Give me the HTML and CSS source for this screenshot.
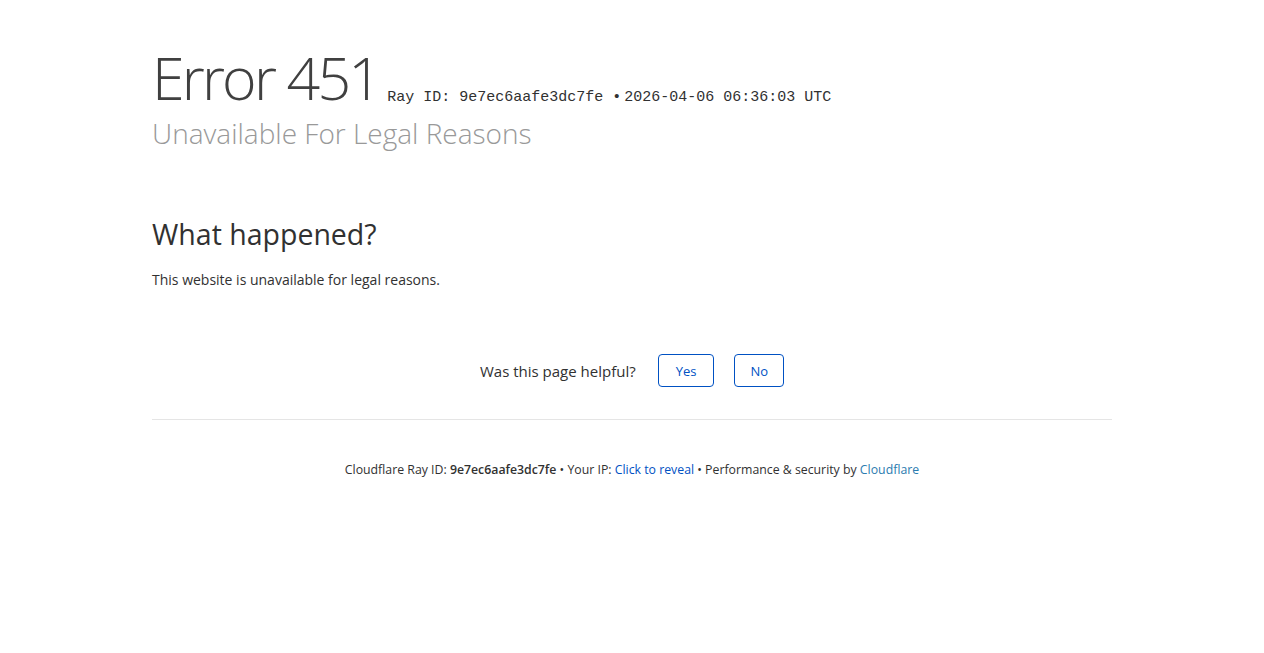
FILE: index.html
```html
<!DOCTYPE html>
<html lang="en">
<head>
<meta charset="utf-8">
<title>Error 451</title>
<link rel="stylesheet" href="styles.css">
</head>
<body>
<div class="page">
  <header class="hero">
    <h1 class="title"><span class="code">Error 451</span><span class="ray">Ray ID: 9e7ec6aafe3dc7fe &bull;</span><span class="ray">2026-04-06 06:36:03 UTC</span></h1>
    <h2 class="subtitle">Unavailable For Legal Reasons</h2>
  </header>
  <section class="what">
    <h2 class="what-title">What happened?</h2>
    <p class="what-text">This website is unavailable for legal reasons.</p>
  </section>
  <div class="feedback">
    <span class="feedback-q">Was this page helpful?</span>
    <button class="btn">Yes</button>
    <button class="btn btn-no">No</button>
  </div>
  <footer class="footer">
    Cloudflare Ray ID: <strong>9e7ec6aafe3dc7fe</strong> &bull; Your IP: <a class="link" href="#">Click to reveal</a> &bull; Performance &amp; security by <a class="link cf" href="#">Cloudflare</a>
  </footer>
</div>
</body>
</html>
```
FILE: styles.css
```css
* { box-sizing: border-box; }
html, body { margin: 0; padding: 0; background: #fff; }
body {
  font-family: "Open Sans", "Noto Sans", sans-serif;
  color: #313131;
}
.page {
  width: 960px;
  margin: 0 auto;
  padding-top: 48px;
}
.title {
  margin: 0;
  font-weight: 300;
  display: flex;
  align-items: baseline;
  line-height: 1;
}
.code {
  font-size: 59px;
  color: #404040;
  letter-spacing: -2.8px;
}
.ray {
  font-family: "Liberation Mono", monospace;
  font-size: 15px;
  font-weight: 400;
  color: #313131;
  margin-left: 8px;
  position: relative;
  top: 1px;
}
.ray + .ray { margin-left: 3px; }
.subtitle {
  margin: 7px 0 0;
  font-size: 28px;
  font-weight: 300;
  color: #999;
}
.what { margin-top: 63px; }
.what-title {
  margin: 0;
  font-size: 28.5px;
  font-weight: 400;
  color: #313131;
}
.what-text {
  margin: 17px 0 0;
  font-size: 14px;
  color: #313131;
}
.feedback {
  margin-top: 65px;
  display: flex;
  justify-content: center;
  align-items: center;
  gap: 20px;
  padding-bottom: 32px;
  border-bottom: 1px solid #e5e5e5;
}
.feedback-q { font-size: 15px; color: #313131; margin-right: 2px; }
.btn {
  font-family: inherit;
  font-size: 13px;
  color: #0051c3;
  background: #fff;
  border: 1px solid #0051c3;
  border-radius: 4px;
  height: 33px;
  padding: 0 17px;
}
.btn-no { padding: 0 15px; }
.footer {
  text-align: center;
  font-size: 12.3px;
  color: #313131;
  margin-top: 41px;
}
.footer strong { font-weight: 600; }
.link { color: #0051c3; text-decoration: none; }
.link.cf { color: #2c7cb0; }
```
